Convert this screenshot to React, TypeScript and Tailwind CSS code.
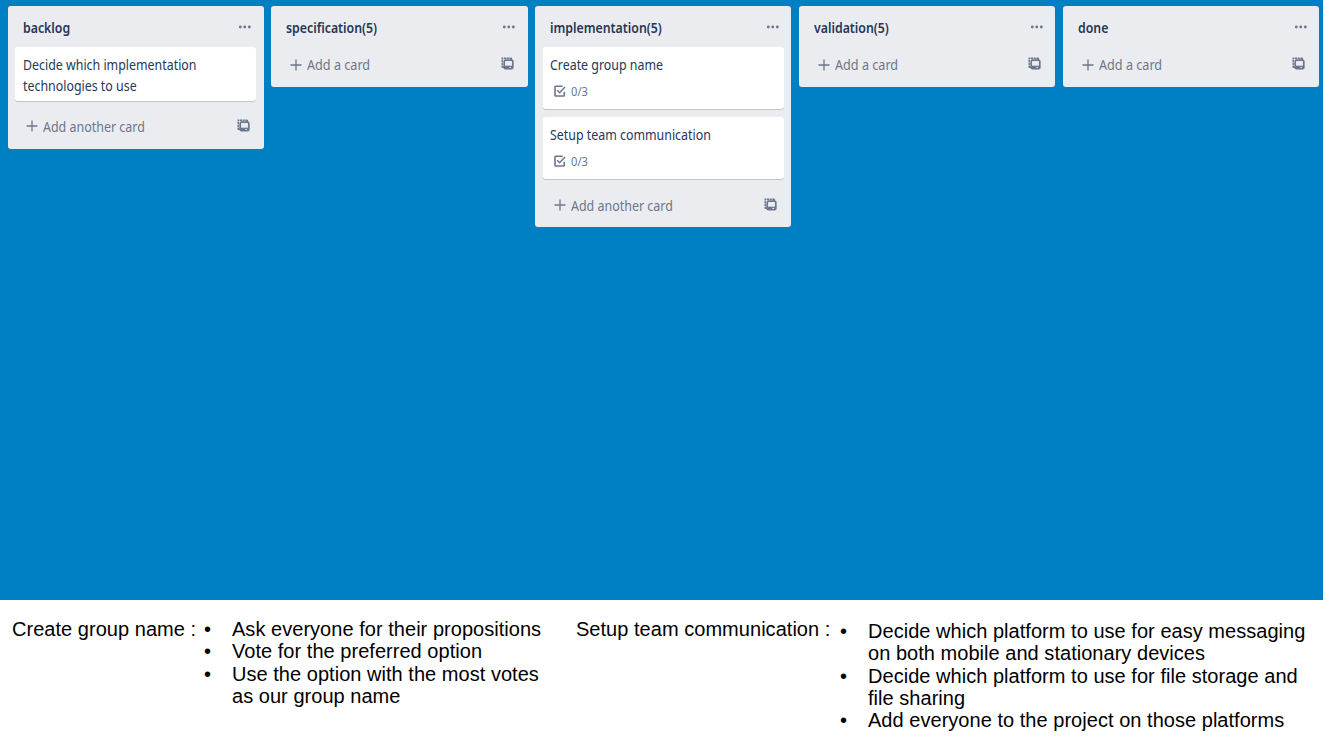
import { Fragment } from 'react';

type Card = { title: string[]; checklist?: string };
type List = { name: string; cards: Card[] };

const lists: List[] = [
  { name: 'backlog', cards: [{ title: ['Decide which implementation', 'technologies to use'] }] },
  { name: 'specification(5)', cards: [] },
  {
    name: 'implementation(5)',
    cards: [
      { title: ['Create group name'], checklist: '0/3' },
      { title: ['Setup team communication'], checklist: '0/3' },
    ],
  },
  { name: 'validation(5)', cards: [] },
  { name: 'done', cards: [] },
];

function Dots() {
  return (
    <svg className="block h-[4px] w-[13px]" viewBox="0 0 13 4" fill="#6b778c">
      <circle cx="2.3" cy="2" r="1.4" />
      <circle cx="6.8" cy="2" r="1.4" />
      <circle cx="11.3" cy="2" r="1.4" />
    </svg>
  );
}

function TemplateIcon() {
  return (
    <svg className="block h-[13px] w-[13px]" viewBox="0 0 13 13" fill="none" stroke="#6b778c">
      <path d="M1.2 10.8V1.2H10.8" strokeWidth="1.4" strokeDasharray="2.2 0.6" />
      <rect x="3.2" y="3.2" width="8.6" height="8.4" rx="1.2" strokeWidth="1.7" />
      <path d="M3.2 10.2H11.8" strokeWidth="3" />
      <path d="M8.4 10.4H10" stroke="#ebecf0" strokeWidth="1" />
      <path d="M1 10.3H3" strokeWidth="1.4" />
      <path d="M10.3 1V3" strokeWidth="1.4" />
    </svg>
  );
}

function CheckIcon() {
  return (
    <svg className="block h-[12px] w-[12px]" viewBox="0 0 12 12" fill="none" stroke="#6b778c" strokeWidth="1.6">
      <path d="M8.6 1.2H1.7Q1 1.2 1 1.9V10.3Q1 11 1.7 11H9.6Q10.3 11 10.3 10.3V6.8" />
      <path d="M3.2 5.2L5.6 7.7L11 2" />
    </svg>
  );
}

function ListColumn({ list }: { list: List }) {
  const filled = list.cards.length > 0;
  return (
    <section className="w-[256.2px] shrink-0 rounded-[3px] bg-[#ebecf0] px-[7.5px]">
      <header className="flex h-[41px] items-start justify-between pr-[5px] pl-[7.5px]">
        <h2 className="mt-[11px] origin-left scale-x-[0.88] text-[14px] leading-[21px] font-semibold whitespace-nowrap text-[#253858]">
          {list.name}
        </h2>
        <div className="mt-[19px]">
          <Dots />
        </div>
      </header>
      <div className="flex flex-col gap-[8px]">
        {list.cards.map((card) => (
          <article
            key={card.title[0]}
            className={`rounded-[3px] bg-white px-[7.5px] pt-[7px] shadow-[0_1px_0_#bfc4cd] ${card.checklist ? 'h-[62px]' : 'h-[54px]'}`}
          >
            <p className="origin-left scale-x-[0.885] text-[14px] leading-[21px] whitespace-nowrap text-[#253858]">
              {card.title.map((line, i) => (
                <Fragment key={line}>
                  {i > 0 && <br />}
                  {line}
                </Fragment>
              ))}
            </p>
            {card.checklist && (
              <div className="flex h-[32px] items-center gap-[5px] pl-[4px] text-[12px] text-[#6b778c]">
                <CheckIcon />
                <span className="mt-px origin-left scale-x-[0.93]">{card.checklist}</span>
              </div>
            )}
          </article>
        ))}
      </div>
      <footer
        className={`flex items-center justify-between pr-[6.5px] pl-[11px] text-[#6b778c] ${
          !filled ? 'h-[39.5px] pb-[4px]' : list.cards.length > 1 ? 'h-[47.5px] pt-[5px]' : 'h-[47.5px] pt-[3px]'
        }`}
      >
        <div className="flex items-center gap-[5px]">
          <svg className="block h-[12px] w-[12px]" viewBox="0 0 12 12" stroke="#6b778c" strokeWidth="1.3">
            <path d="M6 0.5V11.5M0.5 6H11.5" />
          </svg>
          <span className={`origin-left text-[14px] leading-[21px] whitespace-nowrap ${filled ? 'scale-x-[0.89]' : 'scale-x-[0.902]'}`}>
            {filled ? 'Add another card' : 'Add a card'}
          </span>
        </div>
        <div className="pb-[2px]">
          <TemplateIcon />
        </div>
      </footer>
    </section>
  );
}

function Bullets({ items }: { items: string[][] }) {
  return (
    <ul>
      {items.map((lines) => (
        <li key={lines[0]} className="flex">
          <span className="w-[28px]">•</span>
          <span className="whitespace-nowrap">
            {lines.map((line, i) => (
              <Fragment key={line}>
                {i > 0 && <br />}
                {line}
              </Fragment>
            ))}
          </span>
        </li>
      ))}
    </ul>
  );
}

export default function App() {
  return (
    <main className="flex h-[744px] w-[1323px] flex-col overflow-hidden bg-white">
      <div className="flex h-[600px] shrink-0 items-start gap-[7.7px] bg-[#0080c4] pt-[6px] pl-[7.5px] font-['Noto_Sans',sans-serif]">
        {lists.map((list) => (
          <ListColumn key={list.name} list={list} />
        ))}
      </div>
      <div className="flex pl-[12px] font-['Liberation_Sans',Arial,sans-serif] text-[20px] leading-[22.3px] tracking-[0.035px] text-black">
        <div className="flex w-[564px] pt-[18px]">
          <h3 className="w-[192px] whitespace-nowrap">Create group name :</h3>
          <Bullets
            items={[
              ['Ask everyone for their propositions'],
              ['Vote for the preferred option'],
              ['Use the option with the most votes', 'as our group name'],
            ]}
          />
        </div>
        <div className="flex pt-[18px]">
          <h3 className="w-[264px] whitespace-nowrap">Setup team communication :</h3>
          <div className="pt-[2px]">
            <Bullets
              items={[
                ['Decide which platform to use for easy messaging', 'on both mobile and stationary devices'],
                ['Decide which platform to use for file storage and', 'file sharing'],
                ['Add everyone to the project on those platforms'],
              ]}
            />
          </div>
        </div>
      </div>
    </main>
  );
}
